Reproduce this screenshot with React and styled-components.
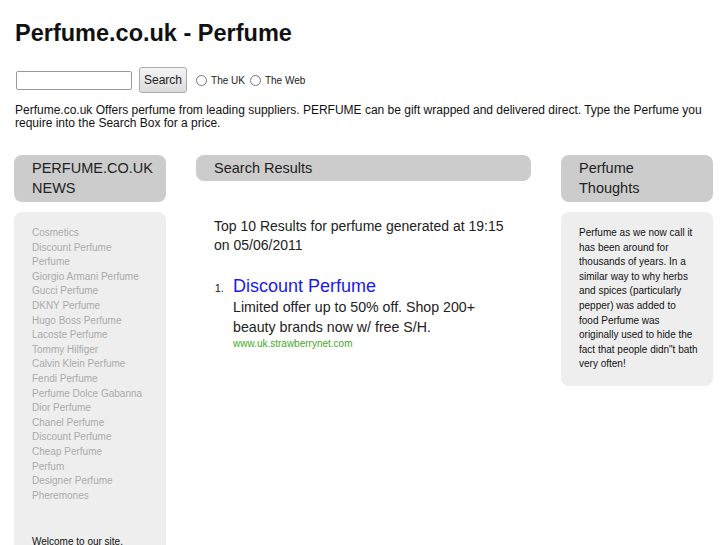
import styled, { createGlobalStyle } from 'styled-components';

const Global = createGlobalStyle`
  body {
    margin: 0;
    background: #fff;
    font-family: "Liberation Sans", Arial, sans-serif;
    color: #222;
  }
`;

const Page = styled.div`
  padding: 0 14px 0 15px;
`;

const Title = styled.h1`
  margin: 0;
  padding-top: 19px;
  font-size: 23.5px;
  line-height: 28px;
  font-weight: bold;
  color: #111;
`;

const SearchForm = styled.form`
  display: flex;
  align-items: center;
  margin-top: 20px;
  padding-left: 1px;
  font-size: 10px;

  input[type="text"] {
    width: 112px;
    height: 15px;
    border: 1px solid #999;
    border-radius: 2px;
    padding: 1px;
    margin-top: 1px;
  }

  button {
    margin-left: 7px;
    height: 26px;
    padding: 0 4px;
    font-family: inherit;
    font-size: 12px;
    color: #222;
    border: 1px solid #aaa;
    border-radius: 3px;
    background: linear-gradient(#f4f4f4, #dcdcdc);
  }

  label {
    display: flex;
    align-items: center;
    gap: 4px;
    margin-left: 9px;
  }

  label + label {
    margin-left: 5px;
  }

  input[type="radio"] {
    margin: 0;
    width: 11px;
    height: 11px;
  }
`;

const Intro = styled.p`
  margin: 11px 0 0;
  font-size: 12px;
  line-height: 12.5px;
  color: #111;
`;

const Columns = styled.div`
  display: grid;
  grid-template-columns: 152px 335px 152px;
  column-gap: 30px;
  margin-top: 26px;
  margin-left: -1px;
`;

const Column = styled.div`
  display: flex;
  flex-direction: column;
  gap: 10px;
`;

const Heading = styled.div`
  background: #cccccc;
  border-radius: 8px;
  padding: ${p => (p.$slim ? '3px 18px' : '3px 18px 4px')};
  font-size: 14.5px;
  line-height: 20px;
  color: #222;
`;

const Panel = styled.div`
  background: #eeeeee;
  border-radius: 8px;
  padding: 14px ${p => p.$right || '18px'} 14px 18px;
  font-size: 10px;
  line-height: 14.6px;
  color: #111;
  min-height: ${p => p.$tall || 'auto'};
`;

const LinkList = styled.ul`
  list-style: none;
  margin: 0;
  padding: 0;

  a {
    color: #aaaaaa;
    text-decoration: none;
  }
`;

const Welcome = styled.p`
  margin: 32px 0 0;
  color: #111;
`;

const Results = styled.div`
  padding: 0 18px;
  color: #222;
`;

const Summary = styled.p`
  margin: 26px 0 0;
  font-size: 14px;
  line-height: 19px;
`;

const ResultList = styled.ol`
  margin: 20px 0 0;
  padding: 0 0 0 19px;
  font-size: 11px;

  li::marker {
    content: counter(list-item) ".\\00a0\\00a0\\00a0";
  }
`;

const ResultTitle = styled.a`
  display: block;
  font-size: 18px;
  line-height: 22px;
  color: #1a1aee;
  text-decoration: none;
`;

const ResultText = styled.div`
  font-size: 14.2px;
  line-height: 20px;
  color: #222;
`;

const ResultUrl = styled.div`
  font-size: 10px;
  line-height: 14px;
  color: #44aa22;
`;

const links = [
  'Cosmetics',
  'Discount Perfume',
  'Perfume',
  'Giorgio Armani Perfume',
  'Gucci Perfume',
  'DKNY Perfume',
  'Hugo Boss Perfume',
  'Lacoste Perfume',
  'Tommy Hilfiger',
  'Calvin Klein Perfume',
  'Fendi Perfume',
  'Perfume Dolce Gabanna',
  'Dior Perfume',
  'Chanel Perfume',
  'Discount Perfume',
  'Cheap Perfume',
  'Perfum',
  'Designer Perfume',
  'Pheremones',
];

const thoughts = [
  'Perfume as we now call it',
  'has been around for',
  'thousands of years. In a',
  'similar way to why herbs',
  'and spices (particularly',
  'pepper) was added to',
  'food Perfume was',
  'originally used to hide the',
  'fact that people didn"t bath',
  'very often!',
];

export default function App() {
  return (
    <Page>
      <Global />
      <Title>Perfume.co.uk - Perfume</Title>
      <SearchForm onSubmit={e => e.preventDefault()}>
        <input type="text" />
        <button type="submit">Search</button>
        <label>
          <input type="radio" name="where" /> The UK
        </label>
        <label>
          <input type="radio" name="where" /> The Web
        </label>
      </SearchForm>
      <Intro>
        Perfume.co.uk Offers perfume from leading suppliers. PERFUME can be gift wrapped and
        delivered direct. Type the Perfume you require into the Search Box for a price.
      </Intro>
      <Columns>
        <Column>
          <Heading>PERFUME.CO.UK NEWS</Heading>
          <Panel $tall="400px">
            <LinkList>
              {links.map((l, i) => (
                <li key={i}>
                  <a href="#">{l}</a>
                </li>
              ))}
            </LinkList>
            <Welcome>Welcome to our site.</Welcome>
          </Panel>
        </Column>
        <Column>
          <Heading $slim>Search Results</Heading>
          <Results>
            <Summary>Top 10 Results for perfume generated at 19:15 on 05/06/2011</Summary>
            <ResultList>
              <li>
                <ResultTitle href="#">Discount Perfume</ResultTitle>
                <ResultText>Limited offer up to 50% off. Shop 200+ beauty brands now w/ free S/H.</ResultText>
                <ResultUrl>www.uk.strawberrynet.com</ResultUrl>
              </li>
            </ResultList>
          </Results>
        </Column>
        <Column>
          <Heading>Perfume Thoughts</Heading>
          <Panel $right="8px">
            {thoughts.map((line, i) => (
              <span key={i}>
                {line}
                {i < thoughts.length - 1 && <br />}
              </span>
            ))}
          </Panel>
        </Column>
      </Columns>
    </Page>
  );
}
